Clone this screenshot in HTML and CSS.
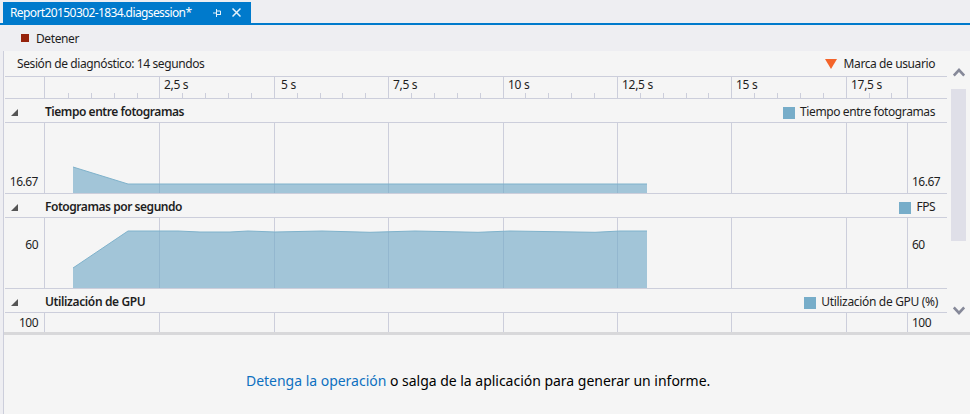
FILE: index.html
```html
<!DOCTYPE html>
<html lang="es">
<head>
<meta charset="utf-8">
<title>Report20150302-1834.diagsession</title>
<link rel="stylesheet" href="styles.css">
</head>
<body>
<header class="tabs">
  <div class="tab">
    <span class="tab-name">Report20150302-1834.diagsession*</span>
    <svg class="pin" width="9" height="8" viewBox="0 0 9 8"><path d="M0 4H3M3.5 0V8M4 2H7.5V6M4 5.5H8" /></svg>
    <svg class="close" width="9" height="9" viewBox="0 0 9 9"><path d="M.5 .5L8.500 8.500M8.500 .5L.5 8.500" /></svg>
  </div>
</header>
<div class="toolbar"><i class="stop"></i><span class="t-stop">Detener</span></div>
<main class="document">
  <div class="session">
    <section class="timeline">
      <div class="summary">
        <span class="t-session">Sesión de diagnóstico: 14 segundos</span>
        <span class="mark"><svg width="12" height="10" viewBox="0 0 12 10"><path d="M0 0H12L6 10Z" fill="#f4642a"/></svg><span class="t-mark">Marca de usuario</span></span>
      </div>
      <div class="ruler">
        <div class="gutter"></div>
        <div class="scale">
          <span></span><span>2,5 s</span><span class="wide">5 s</span><span>7,5 s</span><span>10 s</span><span>12,5 s</span><span>15 s</span><span>17,5 s</span>
          <svg class="ticks" width="864" height="21" viewBox="44 77 864 21" shape-rendering="crispEdges"><path class="line" d="M44.500 77v22M159.500 77v22M274.500 77v22M388.500 77v22M503.500 77v22M617.500 77v22M731.500 77v22M846.500 77v22M907.500 77v22M68.500 93v5M91.500 93v5M114.500 93v5M137.500 93v5M182.500 93v5M205.500 93v5M228.500 93v5M251.500 93v5M297.500 93v5M320.500 93v5M342.500 93v5M365.500 93v5M411.500 93v5M434.500 93v5M457.500 93v5M480.500 93v5M525.500 93v5M548.500 93v5M571.500 93v5M594.500 93v5M640.500 93v5M663.500 93v5M686.500 93v5M708.500 93v5M754.500 93v5M777.500 93v5M800.500 93v5M823.500 93v5M869.500 93v5M891.500 93v5"/></svg>
        </div>
      </div>
      <div class="lane-head">
        <svg class="fold" width="7" height="7" viewBox="0 0 7 7"><path d="M7 0V7H0Z" fill="#555"/></svg>
        <b class="t-frame">Tiempo entre fotogramas</b>
        <span class="legend"><i></i><span class="t-lframe">Tiempo entre fotogramas</span></span>
      </div>
      <div class="lane">
        <span class="low">16.67</span>
        <svg width="864" height="70" viewBox="44 123 864 70"><path class="line" d="M44.500 123v70M159.500 123v70M274.500 123v70M388.500 123v70M503.500 123v70M617.500 123v70M731.500 123v70M846.500 123v70M907.500 123v70"/><path class="area" d="M73 167L128 184H647V193H73Z"/><path class="edge" d="M73 167L128 184H647"/></svg>
        <span class="low">16.67</span>
      </div>
      <div class="lane-head">
        <svg class="fold" width="7" height="7" viewBox="0 0 7 7"><path d="M7 0V7H0Z" fill="#555"/></svg>
        <b class="t-fps">Fotogramas por segundo</b>
        <span class="legend"><i></i><span class="t-lfps">FPS</span></span>
      </div>
      <div class="lane">
        <span class="mid">60</span>
        <svg width="864" height="70" viewBox="44 218 864 70"><path class="line" d="M44.500 218v70M159.500 218v70M274.500 218v70M388.500 218v70M503.500 218v70M617.500 218v70M731.500 218v70M846.500 218v70M907.500 218v70"/><path class="area" d="M73 268L128 231H178L200 232H230L248 231L275 232L322 231L370 232.300L415 231L478 232.300L510 231L595 232.300L620 231H647V288H73Z"/><path class="edge" d="M73 268L128 231H178L200 232H230L248 231L275 232L322 231L370 232.300L415 231L478 232.300L510 231L595 232.300L620 231H647"/></svg>
        <span class="mid">60</span>
      </div>
      <div class="lane-head">
        <svg class="fold" width="7" height="7" viewBox="0 0 7 7"><path d="M7 0V7H0Z" fill="#555"/></svg>
        <b class="t-gpu">Utilización de GPU</b>
        <span class="legend gpu"><i></i><span class="t-lgpu">Utilización de GPU (%)</span></span>
      </div>
      <div class="lane short">
        <span>100</span>
        <svg width="864" height="19" viewBox="44 313 864 19"><path class="line" d="M44.500 313v19M159.500 313v19M274.500 313v19M388.500 313v19M503.500 313v19M617.500 313v19M731.500 313v19M846.500 313v19M907.500 313v19"/></svg>
        <span>100</span>
      </div>
    </section>
    <aside class="scrollbar">
      <svg width="12" height="9" viewBox="0 0 12 9"><path d="M.8 7.500L6 2L11.200 7.500"/></svg>
      <div class="track"><div class="thumb"></div></div>
      <svg width="12" height="9" viewBox="0 0 12 9"><path d="M.8 1.500L6 7L11.200 1.500"/></svg>
    </aside>
  </div>
  <div class="message"><p><a>Detenga la operación</a> o salga de la aplicación para generar un informe.</p></div>
</main>
</body>
</html>
```

FILE: styles.css
```css
* { box-sizing: border-box; }
body { margin: 0; width: 970px; height: 414px; overflow: hidden; background: #eeeef2; color: #1e1e1e; font: 12px/16px "Noto Sans", "Open Sans", sans-serif; white-space: nowrap; }
svg { display: block; flex: none; }
.tabs { height: 25px; padding: 2px 0 0 3px; border-bottom: 2px solid #007acc; }
.tab { width: 248px; height: 21px; display: flex; align-items: center; background: #007acc; color: #fff; padding-left: 7px; }
.tab-name { width: 203px; letter-spacing: -.6px; }
.tab path { fill: none; stroke: #e4f2fb; stroke-width: 1; }
.tab .close { margin-left: 10px; }
.tab .close path { stroke-width: 1.500; }
.toolbar { height: 26px; display: flex; align-items: center; padding: 1px 0 0 21px; gap: 7px; }
.stop { width: 8px; height: 8px; background: #96230c; margin-top: -1px; }
.document { margin-left: 3px; border-left: 1px solid #cccedb; height: 363px; background: #f5f5f5; }
.session { height: 284px; display: flex; padding-left: 1px; border-bottom: 3px solid #d8d8da; }
.timeline { width: 942px; }
.summary { height: 25px; display: flex; align-items: center; justify-content: space-between; padding: 1px 12px 0; }
.mark, .legend { display: flex; align-items: center; }
.mark { gap: 7px; }
.mark svg { margin-top: -1px; }
.ruler { height: 22px; border-top: 1px solid #cccedb; display: flex; }
.gutter { width: 39px; }
.scale { display: grid; grid-template-columns: 115px 115px 114px 115px 114px 114px 115px 62px; position: relative; }
.scale span { padding: 0 0 0 5px; letter-spacing: -.3px; }
.scale .wide { padding-left: 7px; }
.ticks { position: absolute; left: 0; top: 0; }
.line { fill: none; stroke: #cccedb; stroke-width: 1; }
.lane-head { height: 25px; border: solid #cccedb; border-width: 1px 0; display: flex; align-items: center; padding: 3px 12px 0 6px; }
.fold { margin-right: 27px; }
.lane-head b { font-weight: 600; }
.legend { margin-left: auto; gap: 5px; }
.legend i { width: 12px; height: 12px; background: #77adc9; margin-top: 1px; }
.gpu { margin-right: -3px; }
.lane { height: 70px; display: grid; grid-template-columns: 39px 864px 39px; }
.short { height: 19px; }
.lane span { padding: 2px 0 0 4px; letter-spacing: -.5px; }
.lane span:first-child { text-align: right; padding: 2px 6px 0 0; }
.lane .low { margin-top: 49px; }
.lane .mid { margin-top: 17px; }
.area { fill: #72aac8; fill-opacity: .63; }
.edge { fill: none; stroke: #7fb2cb; stroke-width: 1; }
.scrollbar { padding: 17px 0 0 4px; width: 19px; }
.scrollbar svg { margin-left: 2px; }
.scrollbar path { fill: none; stroke: #868999; stroke-width: 2.600; }
.track { height: 229px; padding-top: 12px; }
.thumb { width: 15px; height: 152px; background: #dfdfe8; }
.message { height: 79px; padding: 36px 0 0 242px; }
.message p { margin: 0; font-size: 14px; line-height: 20px; color: #000; letter-spacing: -.02px; }
.message a { color: #0e70c0; }
.t-stop, .t-session, .t-mark, .t-lframe { letter-spacing: -.4px; }
.t-lfps { letter-spacing: -.5px; }
.t-lgpu { letter-spacing: -.32px; }
.t-frame, .t-fps { letter-spacing: -.46px; }
.t-gpu { letter-spacing: -.38px; }
```
